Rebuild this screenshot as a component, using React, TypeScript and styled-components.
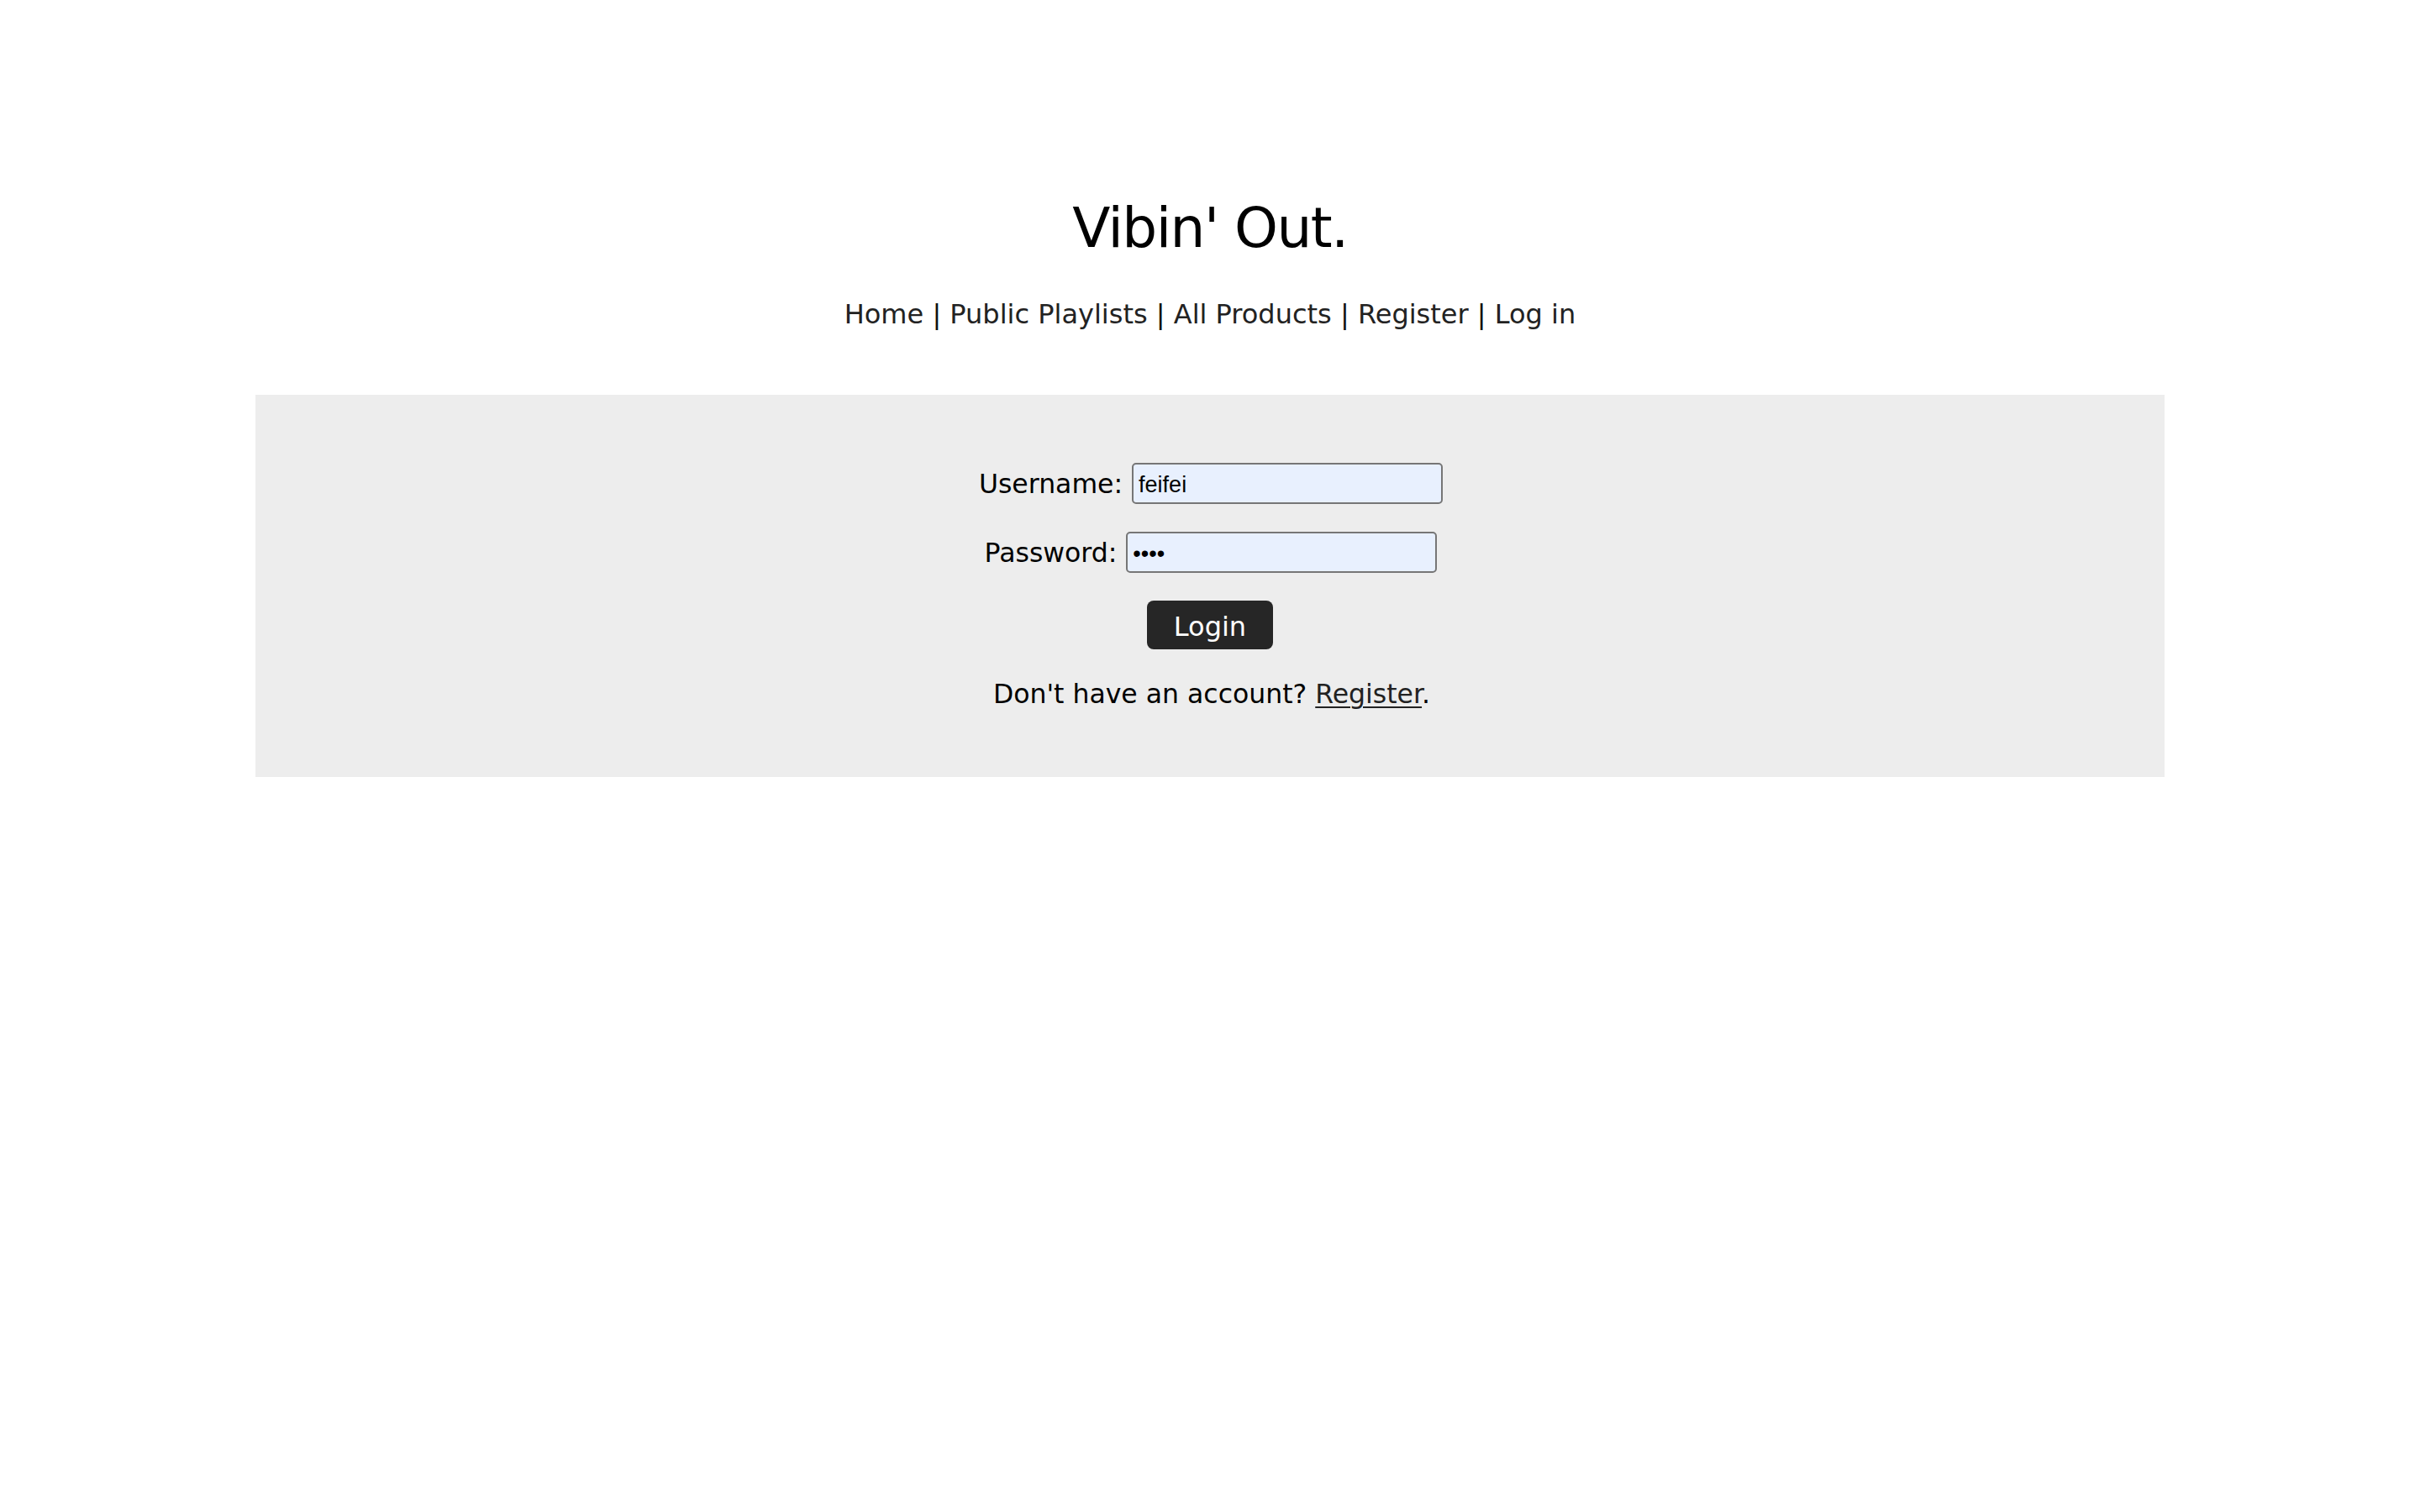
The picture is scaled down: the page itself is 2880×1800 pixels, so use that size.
import React from "react";
import styled, { createGlobalStyle } from "styled-components";

const Global = createGlobalStyle`
  html, body { margin: 0; padding: 0; background: #ffffff; }
  body { font-family: "DejaVu Sans", "Noto Sans", sans-serif; color: #111; }
`;

const Page = styled.div`
  display: flex;
  flex-direction: column;
  align-items: center;
  padding-top: 232px;
`;

const Title = styled.h1`
  margin: 0;
  font-size: 66px;
  font-weight: 400;
  line-height: 80px;
  letter-spacing: -1.5px;
  color: #000;
`;

const Nav = styled.nav`
  margin-top: 42px;
  font-size: 32px;
  line-height: 40px;
  color: #222;
  white-space: pre;
`;

const NavLink = styled.a`
  color: #222;
  text-decoration: none;
`;

const Sep = styled.span`
  color: #111;
`;

const Panel = styled.section`
  align-self: stretch;
  margin: 76px 304px 0;
  background: #ededed;
  padding: 81px 0 79px;
  display: flex;
  flex-direction: column;
  align-items: center;
`;

const Form = styled.form`
  display: flex;
  flex-direction: column;
  align-items: center;
  gap: 33px;
`;

const Row = styled.div`
  display: flex;
  align-items: center;
  gap: 11px;
  font-size: 31.5px;
  line-height: 40px;
  color: #000;
  transform: translateX(1px);
`;

const Input = styled.input`
  box-sizing: border-box;
  width: 370px;
  height: 49px;
  border: 2px solid #767676;
  border-radius: 5px;
  background: #e8f0fe;
  font-family: "Liberation Sans", Arial, sans-serif;
  font-size: 27px;
  padding: 3px 6px 0;
  color: #000;
  outline: none;
`;

const Button = styled.button`
  width: 150px;
  height: 58px;
  border: none;
  border-radius: 8px;
  background: #262626;
  color: #fff;
  font-family: "DejaVu Sans", sans-serif;
  font-size: 32px;
  line-height: 40px;
  padding: 3px 0 0;
`;

const Note = styled.p`
  margin: 0;
  font-size: 31.5px;
  line-height: 40px;
  color: #000;
  transform: translateX(2px);
`;

const Link = styled.a`
  color: #222;
  text-decoration: underline;
  text-underline-offset: 4px;
  text-decoration-thickness: 2px;
`;

export default function App() {
  const items = ["Home", "Public Playlists", "All Products", "Register", "Log in"];
  return (
    <>
      <Global />
      <Page>
        <Title>Vibin' Out.</Title>
        <Nav>
          {items.map((t, i) => (
            <React.Fragment key={t}>
              {i > 0 && <Sep> | </Sep>}
              <NavLink href="#">{t}</NavLink>
            </React.Fragment>
          ))}
        </Nav>
        <Panel>
          <Form onSubmit={(e) => e.preventDefault()}>
            <Row>
              <label>Username:</label>
              <Input type="text" defaultValue="feifei" />
            </Row>
            <Row>
              <label>Password:</label>
              <Input type="password" defaultValue="feif" />
            </Row>
            <Button type="submit">Login</Button>
            <Note>
              Don't have an account? <Link href="#">Register</Link>.
            </Note>
          </Form>
        </Panel>
      </Page>
    </>
  );
}
